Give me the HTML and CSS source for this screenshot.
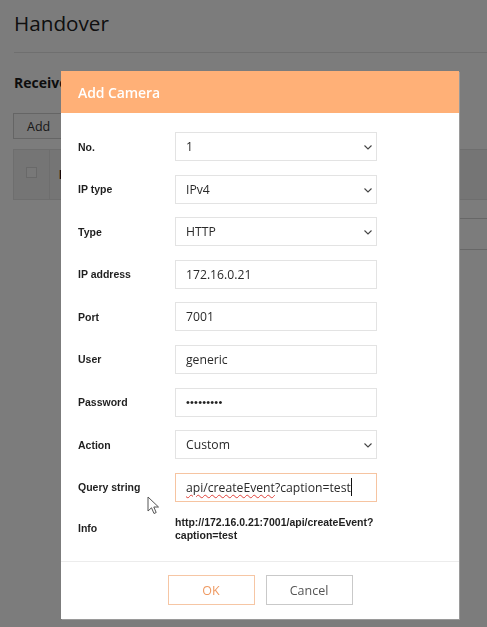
FILE: index.html
```html
<!DOCTYPE html>
<html lang="en">
<head>
<meta charset="utf-8">
<title>Handover - Add Camera</title>
<link rel="stylesheet" href="styles.css">
</head>
<body>
<div class="page">
  <header class="page-head"><h1 class="title">Handover</h1></header>
  <h2 class="section">Receivers</h2>
  <button class="page-btn">Add</button>
  <div class="table">
    <div class="cell-check"><span class="checkbox"></span></div>
    <div class="cell-head">IP</div>
    <div class="cell-head cell-right">I</div>
  </div>
  <div class="side-row"></div>
</div>

<div class="overlay"></div>

<div class="modal">
  <div class="modal-head">Add Camera</div>
  <div class="modal-body">
    <div class="label">No.</div>
    <div class="control select"><span>1</span><svg class="chev" viewBox="0 0 8 5" width="8" height="5"><polyline points="0.5,0.5 4,4 7.5,0.5"/></svg></div>

    <div class="label">IP type</div>
    <div class="control select"><span>IPv4</span><svg class="chev" viewBox="0 0 8 5" width="8" height="5"><polyline points="0.5,0.5 4,4 7.5,0.5"/></svg></div>

    <div class="label">Type</div>
    <div class="control select"><span>HTTP</span><svg class="chev" viewBox="0 0 8 5" width="8" height="5"><polyline points="0.5,0.5 4,4 7.5,0.5"/></svg></div>

    <div class="label">IP address</div>
    <div class="control"><span>172.16.0.21</span></div>

    <div class="label">Port</div>
    <div class="control"><span>7001</span></div>

    <div class="label">User</div>
    <div class="control"><span>generic</span></div>

    <div class="label">Password</div>
    <div class="control"><span class="dots">•••••••••</span></div>

    <div class="label">Action</div>
    <div class="control select"><span>Custom</span><svg class="chev" viewBox="0 0 8 5" width="8" height="5"><polyline points="0.5,0.5 4,4 7.5,0.5"/></svg></div>

    <div class="label">Query string</div>
    <div class="control focus"><span><span class="spell">api/createEvent</span>?caption=test</span><span class="caret"></span></div>

    <div class="label">Info</div>
    <div class="info">http://172.16.0.21:7001/api/createEvent?<br>caption=test</div>
  </div>
  <div class="modal-foot">
    <button class="btn btn-ok">OK</button>
    <button class="btn btn-cancel">Cancel</button>
  </div>
</div>

<svg class="pointer" width="14" height="20" viewBox="0 0 14 20"><path d="M1 1 L1 15 L4.5 11.8 L7 17.5 L9.2 16.5 L6.8 11 L11.5 11 Z" fill="#fff" stroke="#555" stroke-width="1"/></svg>
</body>
</html>
```

FILE: styles.css
```css
html, body {
  margin: 0;
  padding: 0;
  background: #ffffff;
  overflow: hidden;
  height: 627px;
}

body {
  font-family: "Open Sans", "Liberation Sans", sans-serif;
  color: #262626;
}

.page {
  padding-left: 14px;
}

.page-head {
  padding-top: 10px;
  padding-bottom: 15px;
  border-bottom: 1px solid #e4e4e4;
}

.title {
  margin: 0;
  font-size: 20.7px;
  font-weight: 400;
  line-height: 27px;
  color: #222;
}

.section {
  margin: 20px 0 0;
  font-size: 14px;
  font-weight: 700;
  line-height: 19px;
  color: #1c1c1c;
}

.page-btn {
  display: block;
  margin: 21px 0 0 -1px;
  height: 26px;
  width: 120px;
  padding: 0 13px;
  text-align: left;
  font-family: "Open Sans", sans-serif;
  font-size: 12.5px;
  color: #333;
  background: #fafafa;
  border: 1px solid #cfcfcf;
}

.table {
  margin: 10px 0 0 -1px;
  height: 49px;
  display: flex;
  align-items: center;
  background: #f0f0f0;
  border: 1px solid #e2e2e2;
  border-right: none;
}

.cell-check {
  width: 36px;
  height: 100%;
  display: flex;
  align-items: center;
  justify-content: center;
  border-right: 1px solid #e2e2e2;
  box-sizing: border-box;
}

.checkbox {
  width: 9px;
  height: 9px;
  border: 1px solid #d8d8d8;
  background: #f7f7f7;
  margin-top: -4px;
}

.cell-head {
  font-family: "Liberation Sans", sans-serif;
  font-weight: 700;
  font-size: 12px;
  padding-left: 9px;
  color: #111;
}

.cell-right {
  margin-left: auto;
  padding: 0;
  margin-right: -4px;
}

.side-row {
  margin: 18px 0 0 380px;
  height: 30px;
  border-top: 1px solid #d4d4d4;
  border-bottom: 1px solid #d4d4d4;
}

.overlay {
  position: fixed;
  inset: 0;
  background: rgba(0, 0, 0, 0.515);
}

.modal {
  position: fixed;
  left: 61px;
  top: 71px;
  width: 398px;
  background: #ffffff;
  box-shadow: 1px 1px 0 #9a9a9a;
}

.modal-head {
  height: 42px;
  display: flex;
  align-items: center;
  padding-left: 17px;
  background: #ffb077;
  color: #ffffff;
  font-size: 14px;
  font-weight: 600;
  letter-spacing: -0.1px;
}

.modal-body {
  display: grid;
  grid-template-columns: 97px 202px;
  row-gap: 13.6px;
  align-items: center;
  padding: 19px 17px 20px;
}

.label {
  font-family: "Liberation Sans", Arial, sans-serif;
  font-weight: 700;
  font-size: 10.5px;
  color: #1f1f1f;
}

.control {
  position: relative;
  height: 29px;
  box-sizing: border-box;
  border: 1px solid #e3e3e3;
  display: flex;
  align-items: center;
  padding-left: 10px;
  font-size: 12.2px;
  color: #2a2a2a;
}

.select .chev {
  position: absolute;
  right: 4px;
  top: 12px;
  fill: none;
  stroke: #444;
  stroke-width: 1.1;
}

.dots {
  font-family: "Liberation Sans", sans-serif;
  font-size: 11px;
  letter-spacing: 0.2px;
  color: #222;
}

.focus {
  border-color: #f6c4a1;
}

.spell {
  text-decoration: underline wavy #e0413a;
  text-decoration-thickness: 1px;
  text-underline-offset: 2px;
}

.caret {
  display: inline-block;
  width: 1px;
  height: 18px;
  background: #111;
}

.info {
  font-family: "Liberation Sans", Arial, sans-serif;
  font-weight: 700;
  font-size: 10.5px;
  line-height: 12.5px;
  color: #1f1f1f;
  padding-top: 1px;
}

.modal-foot {
  border-top: 1px solid #ececec;
  display: flex;
  justify-content: center;
  gap: 11px;
  padding: 13px 0 14px;
}

.btn {
  height: 30px;
  width: 87px;
  background: #ffffff;
  font-family: "Open Sans", sans-serif;
  font-size: 12.5px;
  cursor: pointer;
}

.btn-ok {
  border: 1px solid #f6c6a4;
  color: #ef9a62;
}

.btn-cancel {
  border: 1px solid #c9c9c9;
  color: #555;
}

.pointer {
  position: fixed;
  left: 147px;
  top: 496px;
}
```
